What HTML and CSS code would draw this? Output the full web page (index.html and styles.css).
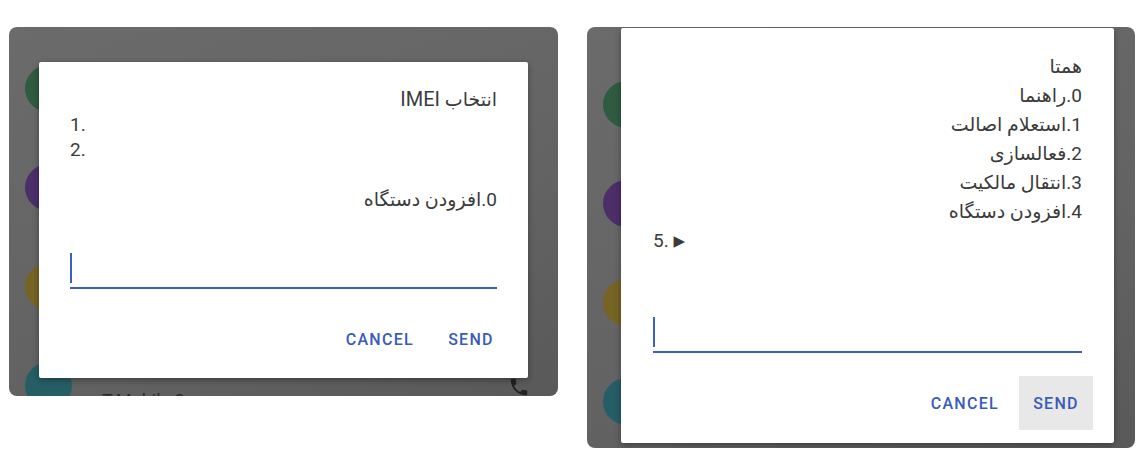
FILE: index.html
```html
<!DOCTYPE html>
<html lang="fa">

<head>
    <meta charset="UTF-8">
    <meta name="viewport" content="width=device-width, initial-scale=1.0">
    <title>USSD</title>
    <link rel="stylesheet" href="styles.css">
</head>

<body>
    <div class="screens">
        <!-- انتخاب IMEI -->
        <div class="screen screen-imei">
            <div class="list">
                <div class="row"><span class="avatar green"></span></div>
                <div class="row"><span class="avatar purple"></span></div>
                <div class="row"><span class="avatar yellow"></span></div>
                <div class="row">
                    <span class="avatar teal"></span>
                    <span class="name">T-Mobile 2</span>
                    <span class="call">
                        <svg width="22" height="22" viewBox="0 0 24 24">
                            <path d="M6.6 10.8c1.4 2.8 3.8 5.1 6.6 6.6l2.2-2.2c.3-.3.7-.4 1-.2 1.1.4 2.3.6 3.6.6.6 0 1 .4 1 1V20c0 .6-.4 1-1 1C10.6 21 3 13.4 3 4c0-.6.4-1 1-1h3.5c.6 0 1 .4 1 1 0 1.3.2 2.5.6 3.6.1.3 0 .7-.2 1z" fill="#222"/>
                        </svg>
                    </span>
                </div>
            </div>
            <div class="dialog">
                <div class="message">
                    <div class="line" dir="auto">انتخاب <span class="latin">IMEI</span></div>
                    <div class="line" dir="auto">1.</div>
                    <div class="line" dir="auto">2.</div>
                    <div class="line">&nbsp;</div>
                    <div class="line" dir="auto">0.افزودن دستگاه</div>
                </div>
                <div class="field"><span class="caret"></span></div>
                <div class="actions">
                    <button class="btn">Cancel</button>
                    <button class="btn">Send</button>
                </div>
            </div>
        </div>

        <!-- منوی همتا -->
        <div class="screen screen-menu">
            <div class="list">
                <div class="row"><span class="avatar green"></span></div>
                <div class="row"><span class="avatar purple"></span></div>
                <div class="row"><span class="avatar yellow"></span></div>
                <div class="row"><span class="avatar teal"></span></div>
            </div>
            <div class="dialog">
                <div class="message">
                    <div class="line" dir="auto">همتا</div>
                    <div class="line" dir="auto">0.راهنما</div>
                    <div class="line" dir="auto">1.استعلام اصالت</div>
                    <div class="line" dir="auto">2.فعالسازی</div>
                    <div class="line" dir="auto">3.انتقال مالکیت</div>
                    <div class="line" dir="auto">4.افزودن دستگاه</div>
                    <div class="line" dir="auto">5. <span class="arrow">&#9654;</span></div>
                </div>
                <div class="field"><span class="caret"></span></div>
                <div class="actions">
                    <button class="btn">Cancel</button>
                    <button class="btn pressed">Send</button>
                </div>
            </div>
        </div>
    </div>
</body>

</html>
```

FILE: styles.css
```css
body {
    margin: 0;
    padding: 27px 0 0 9px;
    background: #fff;
    font-family: Roboto, "DejaVu Sans", sans-serif;
}

.screens {
    display: flex;
    align-items: flex-start;
    gap: 29px;
}

.screen {
    position: relative;
    overflow: hidden;
    border-radius: 8px;
    background: linear-gradient(160deg, #6b6b6b 0%, #636363 60%, #595959 100%);
}

.screen-imei {
    width: 549px;
    height: 369px;
}

.screen-menu {
    width: 548px;
    height: 421px;
}

/* list behind the dialog */
.list {
    display: flex;
    flex-direction: column;
    padding-left: 16px;
}

.screen-imei .list {
    padding-top: 38px;
}

.screen-menu .list {
    padding-top: 54px;
}

.row {
    display: flex;
    align-items: flex-start;
    height: 99px;
}

.avatar {
    width: 47px;
    height: 47px;
    border-radius: 50%;
    flex: none;
}

.green { background: #2f5c40; }
.purple { background: #4c2e69; }
.yellow { background: #766424; }
.teal { background: #265e66; }

.name {
    margin: 28px 0 0 30px;
    font-size: 18px;
    color: #2a2a2a;
}

.call {
    margin: 14px 0 0 auto;
    padding-right: 28px;
}

/* dialog */
.dialog {
    position: absolute;
    background: #fff;
    border-radius: 2px;
    box-shadow: 0 2px 6px rgba(0, 0, 0, 0.35);
}

.screen-imei .dialog {
    top: 35px;
    left: 30px;
    width: 489px;
}

.screen-menu .dialog {
    top: 1px;
    left: 34px;
    width: 493px;
}

.message {
    color: #3b3b3b;
    font-size: 19px;
}

.screen-imei .message {
    padding: 25px 31px 0;
    line-height: 25px;
}

.screen-menu .message {
    padding: 24px 32px 0;
    line-height: 29px;
}

.line {
    text-align: start;
    white-space: pre;
}

.latin {
    font-size: 20px;
}

.arrow {
    font-size: 15px;
    line-height: 1;
    vertical-align: 1px;
}

.field {
    height: 34px;
    border-bottom: 2px solid #3d5fc2;
}

.screen-imei .field {
    margin: 41px 31px 0;
}

.screen-menu .field {
    margin: 62px 32px 0;
}

.caret {
    display: block;
    width: 2px;
    height: 30px;
    background: #3d5fc2;
}

.actions {
    display: flex;
    justify-content: flex-end;
    gap: 8px;
    margin-top: 23px;
    padding: 0 20px 12px 0;
}

.screen-menu .actions {
    padding: 0 21px 13px 0;
}

.btn {
    min-width: 74px;
    height: 54px;
    padding: 0 12px;
    border: none;
    background: transparent;
    font-family: Roboto, sans-serif;
    font-weight: 500;
    font-size: 16px;
    letter-spacing: 1.3px;
    text-transform: uppercase;
    color: #3a5bb6;
}

.btn.pressed {
    background: #e8e8e8;
}
```
